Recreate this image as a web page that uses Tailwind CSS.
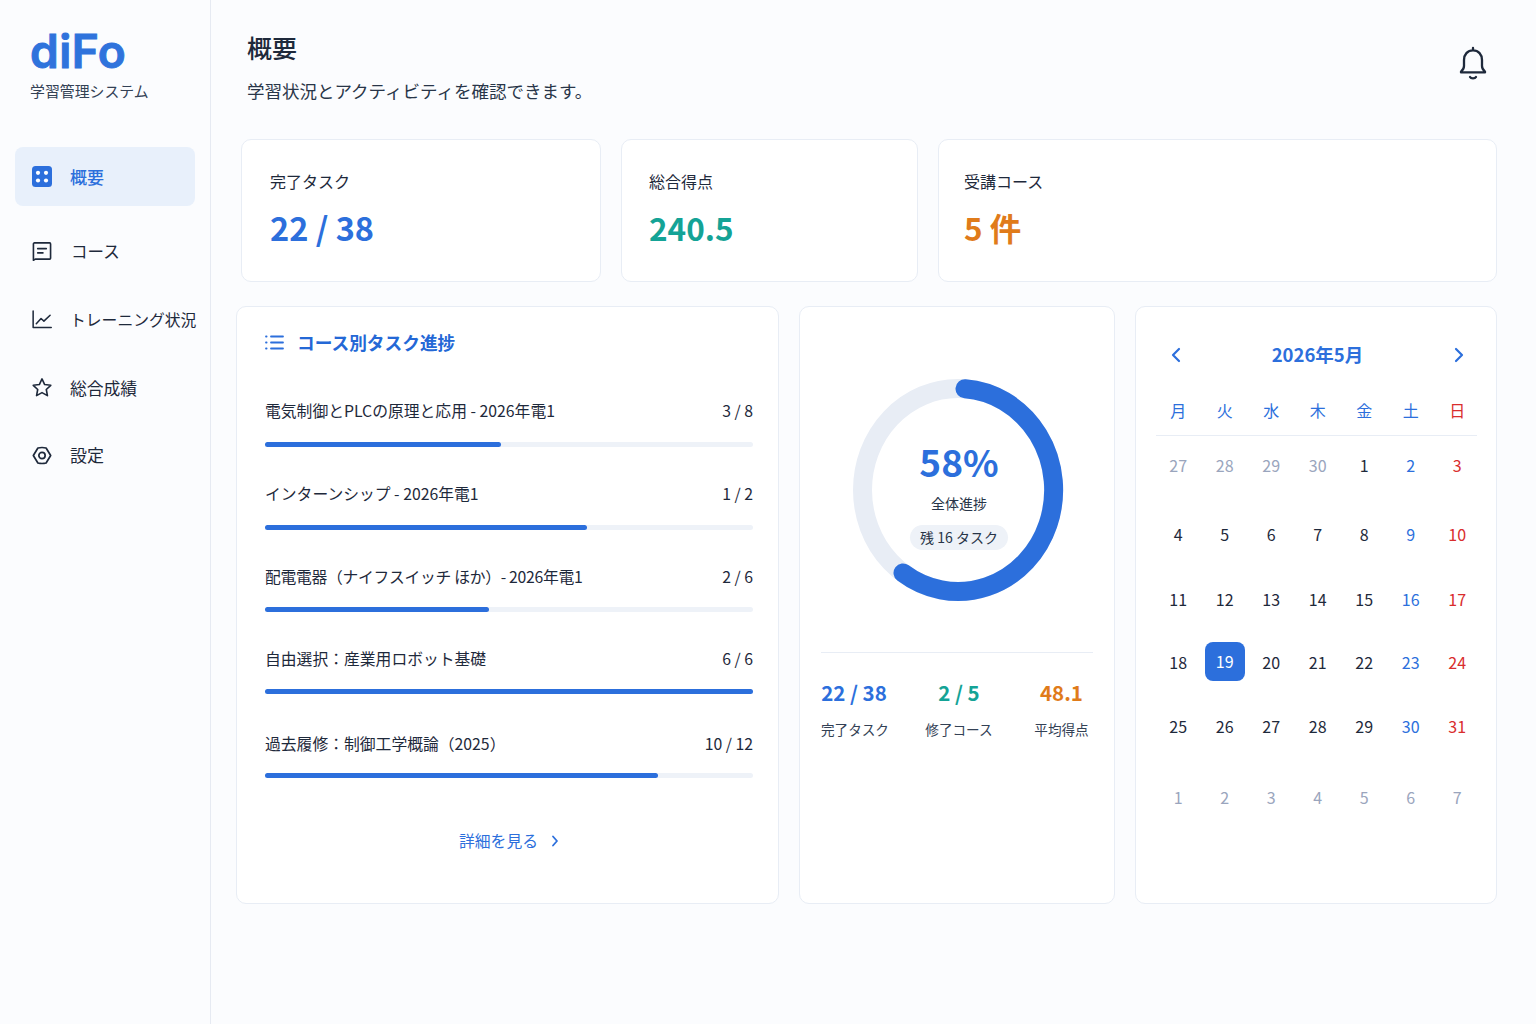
<!doctype html>
<html lang="ja">
<head>
    <meta charset="UTF-8">
    <script src="https://cdn.jsdelivr.net/npm/@tailwindcss/browser@4"></script>
    <title>diFo - 概要</title>
</head>

<body class="bg-[#fbfcfe] text-[#1e293b] font-['Noto_Sans_CJK_JP','Noto_Sans',sans-serif]">
<div class="flex w-[1536px] h-[1024px] overflow-hidden">

    <!-- sidebar -->
    <aside class="w-[211px] shrink-0 border-r border-[#e6eaf2] px-[15px]">
        <div class="pl-[15px] pt-[21px]">
            <div class="text-[46px] leading-[60px] font-semibold tracking-[0.5px] text-[#2f73dc] font-['Inter',sans-serif] [-webkit-text-stroke:1px_#2f73dc]">diFo</div>
            <div class="-mt-[1px] text-[14.9px] leading-[22px] text-[#334155]">学習管理システム</div>
        </div>

        <nav class="mt-[45px] flex flex-col">
            <a class="flex items-center h-[59px] rounded-lg bg-[#e8f0fb] pl-[17px] gap-[18px] text-[17px] font-medium text-[#2c6fdc]">
                <svg class="w-[20px] h-[21px] shrink-0" viewBox="0 0 20 21"><rect width="20" height="21" rx="3.5" fill="#2c6fdc"/><circle cx="6" cy="6.8" r="2.1" fill="#fff"/><circle cx="14" cy="6.8" r="2.1" fill="#fff"/><circle cx="6" cy="14.5" r="2.1" fill="#fff"/><circle cx="14" cy="14.5" r="2.1" fill="#fff"/></svg>
                概要
            </a>
            <a class="mt-[25px] flex items-center h-[40px] pl-[17px] gap-[19px] text-[16.5px]">
                <svg class="w-[20px] h-[21px] shrink-0" viewBox="0 0 21 21" fill="none" stroke="#1e293b" stroke-width="1.7" stroke-linejoin="round" stroke-linecap="round"><path d="M2.5 1.5h16a1 1 0 0 1 1 1v15a1 1 0 0 1-1 1H3.5l-2 1.2V2.5a1 1 0 0 1 1-1z"/><path d="M6 7.5h9M6 12h5.5"/></svg>
                コース
            </a>
            <a class="mt-[28px] flex items-center h-[40px] pl-[17px] gap-[18px] text-[15.8px] leading-[26px] pt-[1px] whitespace-nowrap">
                <svg class="w-[20px] h-[21px] shrink-0 -mt-[1px]" viewBox="0 0 21 21" fill="none" stroke="#1e293b" stroke-width="1.6" stroke-linejoin="round" stroke-linecap="round"><path d="M1.2 1.5V19h19"/><path d="M4.5 15l5-5.5 3 2.7L19 6"/></svg>
                トレーニング状況
            </a>
            <a class="mt-[28px] flex items-center h-[40px] pl-[17px] gap-[18px] text-[16.8px] leading-[26px] pt-[1px]">
                <svg class="w-[20px] h-[21px] shrink-0 -mt-[1px]" viewBox="0 0 21 21" fill="none" stroke="#1e293b" stroke-width="1.7" stroke-linejoin="round"><path d="M10.5 1.5l2.8 5.9 6.4.8-4.7 4.4 1.2 6.4-5.7-3.100-5.700 3.100 1.200-6.400L1.300 8.200l6.400-.8z"/></svg>
                総合成績
            </a>
            <a class="mt-[28px] flex items-center h-[40px] pl-[17px] gap-[18px] text-[17px]">
                <svg class="w-[20px] h-[21px] shrink-0" viewBox="0 0 21 21" fill="none" stroke="#1e293b" stroke-width="1.8" stroke-linejoin="round"><path d="M6.2 2.6Q10.5 1.6 14.8 2.6L19.6 10.5L14.8 18.4Q10.5 19.4 6.2 18.4L1.4 10.5Z"/><circle cx="10.5" cy="10.5" r="3.3"/></svg>
                設定
            </a>
        </nav>
    </aside>

    <!-- main -->
    <main class="flex-1 relative">
        <header class="pl-[36px] pt-[30px]">
            <h1 class="text-[25px] leading-[34px] font-medium">概要</h1>
            <p class="mt-[14px] text-[17.5px] leading-[26px] text-[#283548]">学習状況とアクティビティを確認できます。</p>
        </header>
        <svg class="absolute left-[1248px] top-[46px] w-[28px] h-[34px]" viewBox="0 0 28 34" fill="none" stroke="#1e293b" stroke-width="2.3" stroke-linecap="round" stroke-linejoin="round"><path d="M14 2v2.4M14 4.4c-5.5 0-9 4-9 9.6v6c0 2.5-1 4-3 5.6v.8h24v-.8c-2-1.6-3-3.1-3-5.6v-6c0-5.6-3.5-9.6-9-9.6z"/><path d="M11 31c1 1.8 5 1.8 6 0"/></svg>

        <!-- stat cards -->
        <section class="ml-[30px] mt-[35px] grid grid-cols-[360px_297px_559px] gap-x-[20px] h-[143px]">
            <div class="rounded-[10px] border border-[#e8edf5] bg-white pl-[28px] pt-[29px]">
                <div class="text-[16px] leading-[24px]">完了タスク</div>
                <div class="mt-[10px] text-[32.5px] leading-[48px] font-semibold text-[#2c6fdc]">22 / 38</div>
            </div>
            <div class="rounded-[10px] border border-[#e8edf5] bg-white pl-[27px] pt-[29px]">
                <div class="text-[16px] leading-[24px]">総合得点</div>
                <div class="mt-[10px] text-[31.5px] leading-[48px] font-semibold text-[#14a396]">240.5</div>
            </div>
            <div class="rounded-[10px] border border-[#e8edf5] bg-white pl-[25px] pt-[29px]">
                <div class="text-[16px] leading-[24px]">受講コース</div>
                <div class="mt-[10px] text-[31.5px] leading-[48px] font-semibold text-[#e07b1a]">5 件</div>
            </div>
        </section>

        <!-- lower cards -->
        <section class="ml-[25px] mt-[24px] grid grid-cols-[543px_316px_362px] gap-x-[20px] h-[598px]">

            <!-- course progress -->
            <div class="rounded-[10px] border border-[#e8edf5] bg-white pl-[28px] pr-[25px]">
                <div class="flex items-center h-[26px] mt-[22px] gap-[13px] text-[17.7px] font-semibold text-[#2468d6]">
                    <svg class="w-[19px] h-[15px]" viewBox="0 0 19 15" fill="none" stroke="#2c6fdc" stroke-width="1.8" stroke-linecap="round"><path d="M6 1.5h12M6 7.5h12M6 13.5h12"/><path d="M1 1.5h.6M1 7.5h.6M1 13.5h.6"/></svg>
                    コース別タスク進捗
                </div>

                <div class="mt-[44px] h-[54px]">
                    <div class="flex justify-between text-[15.8px] leading-[24px]"><span>電気制御とPLCの原理と応用 - 2026年電1</span><span>3 / 8</span></div>
                    <div class="mt-[19px] h-[5px] rounded-full bg-[#eef2f8]"><div class="h-full w-[48.4%] rounded-full bg-[#2c6fdc]"></div></div>
                </div>
                <div class="mt-[29px] h-[54px]">
                    <div class="flex justify-between text-[15.8px] leading-[24px]"><span>インターンシップ - 2026年電1</span><span>1 / 2</span></div>
                    <div class="mt-[19px] h-[5px] rounded-full bg-[#eef2f8]"><div class="h-full w-[66%] rounded-full bg-[#2c6fdc]"></div></div>
                </div>
                <div class="mt-[29px] h-[54px]">
                    <div class="flex justify-between text-[15.8px] leading-[24px]"><span class="tracking-[-0.3px]">配電電器（ナイフスイッチ ほか）- 2026年電1</span><span>2 / 6</span></div>
                    <div class="mt-[18px] h-[5px] rounded-full bg-[#eef2f8]"><div class="h-full w-[46%] rounded-full bg-[#2c6fdc]"></div></div>
                </div>
                <div class="mt-[28px] h-[54px]">
                    <div class="flex justify-between text-[15.8px] leading-[24px]"><span>自由選択：産業用ロボット基礎</span><span>6 / 6</span></div>
                    <div class="mt-[18px] h-[5px] rounded-full bg-[#eef2f8]"><div class="h-full w-full rounded-full bg-[#2c6fdc]"></div></div>
                </div>
                <div class="mt-[31px] h-[54px]">
                    <div class="flex justify-between text-[15.8px] leading-[24px]"><span>過去履修：制御工学概論（2025）</span><span>10 / 12</span></div>
                    <div class="mt-[17px] h-[5px] rounded-full bg-[#eef2f8]"><div class="h-full w-[80.5%] rounded-full bg-[#2c6fdc]"></div></div>
                </div>

                <a class="mt-[43px] flex items-center justify-center gap-[13px] text-[15.8px] leading-[24px] text-[#2c6fdc]">
                    詳細を見る
                    <svg class="w-[8px] h-[12px]" viewBox="0 0 8 12" fill="none" stroke="#2c6fdc" stroke-width="1.8" stroke-linecap="round" stroke-linejoin="round"><path d="M2 1.5l4 4.5-4 4.5"/></svg>
                </a>
            </div>

            <!-- overall progress -->
            <div class="rounded-[10px] border border-[#e8edf5] bg-white px-[21px]">
                <div class="relative mt-[63px] ml-[22px] w-[230px] h-[240px]">
                    <svg class="w-[230px] h-[240px]" viewBox="0 0 230 240" fill="none" stroke-width="19" stroke-linecap="round">
                        <ellipse cx="115" cy="120" rx="95.5" ry="101.5" stroke="#e8edf5"/>
                        <path d="M122 18.8A95.5 101.5 0 1 1 60 202.9" stroke="#2c6fdc"/>
                    </svg>
                    <div class="absolute inset-0 pl-[2px] flex flex-col items-center">
                        <div class="mt-[65px] text-[37px] leading-[52px] font-semibold text-[#2c6fdc]">58%</div>
                        <div class="mt-[5px] text-[14px] leading-[22px] text-[#283548]">全体進捗</div>
                        <div class="mt-[11px] h-[25px] px-[10px] rounded-full bg-[#eef2f8] text-[14px] leading-[25px] text-[#283548]">残 16 タスク</div>
                    </div>
                </div>
                <div class="mt-[42px] border-t border-[#e8edf5] flex text-center pt-[22px]">
                    <div class="w-[66px]">
                        <div class="text-[20.5px] leading-[34px] font-semibold whitespace-nowrap text-[#2c6fdc]">22 / 38</div>
                        <div class="mt-[10px] text-[13.6px] leading-[20px] text-[#334155] whitespace-nowrap">完了タスク</div>
                    </div>
                    <div class="ml-[38px] w-[68px]">
                        <div class="text-[20.5px] leading-[34px] font-semibold text-[#14a396]">2 / 5</div>
                        <div class="mt-[10px] text-[13.6px] leading-[20px] text-[#334155] whitespace-nowrap">修了コース</div>
                    </div>
                    <div class="ml-[41px] w-[55px]">
                        <div class="text-[20.5px] leading-[34px] font-semibold text-[#e07b1a]">48.1</div>
                        <div class="mt-[10px] text-[13.6px] leading-[20px] text-[#334155] whitespace-nowrap">平均得点</div>
                    </div>
                </div>
            </div>

            <!-- calendar -->
            <div class="rounded-[10px] border border-[#e8edf5] bg-white px-[19px]">
                <div class="mt-[34px] flex items-center justify-between h-[28px] pl-[15px] pr-[12px] text-[18.5px] font-semibold text-[#2c6fdc]">
                    <svg class="w-[12px] h-[16px]" viewBox="0 0 12 16" fill="none" stroke="#2c6fdc" stroke-width="2.2" stroke-linecap="round" stroke-linejoin="round"><path d="M9 2L3 8l6 6"/></svg>
                    2026年5月
                    <svg class="w-[12px] h-[16px]" viewBox="0 0 12 16" fill="none" stroke="#2c6fdc" stroke-width="2.2" stroke-linecap="round" stroke-linejoin="round"><path d="M3 2l6 6-6 6"/></svg>
                </div>
                <div class="mt-[29px] h-[37px] grid grid-cols-7 w-[325.5px] text-center text-[16px] leading-[24px] text-[#2c6fdc]">
                    <span>月</span><span>火</span><span>水</span><span>木</span><span>金</span><span>土</span><span class="text-[#d92d2d]">日</span>
                </div>
                <div class="w-[321px] ml-[1px] border-t border-[#e8edf5]"></div>
                <div class="grid grid-cols-7 w-[325.5px] grid-rows-[58px_80px_50px_76px_52px_90px] items-center justify-items-center text-[16px] leading-[24px]">
                    <span class="text-[#9aa5bd]">27</span><span class="text-[#9aa5bd]">28</span><span class="text-[#9aa5bd]">29</span><span class="text-[#9aa5bd]">30</span><span>1</span><span class="text-[#2c6fdc]">2</span><span class="text-[#d92d2d]">3</span>
                    <span>4</span><span>5</span><span>6</span><span>7</span><span>8</span><span class="text-[#2c6fdc]">9</span><span class="text-[#d92d2d]">10</span>
                    <span>11</span><span>12</span><span>13</span><span>14</span><span>15</span><span class="text-[#2c6fdc]">16</span><span class="text-[#d92d2d]">17</span>
                    <span>18</span><span class="flex items-center justify-center w-[40px] h-[39px] -translate-y-[1px] rounded-lg bg-[#2c6fdc] text-white">19</span><span>20</span><span>21</span><span>22</span><span class="text-[#2c6fdc]">23</span><span class="text-[#d92d2d]">24</span>
                    <span>25</span><span>26</span><span>27</span><span>28</span><span>29</span><span class="text-[#2c6fdc]">30</span><span class="text-[#d92d2d]">31</span>
                    <span class="text-[#9aa5bd]">1</span><span class="text-[#9aa5bd]">2</span><span class="text-[#9aa5bd]">3</span><span class="text-[#9aa5bd]">4</span><span class="text-[#9aa5bd]">5</span><span class="text-[#9aa5bd]">6</span><span class="text-[#9aa5bd]">7</span>
                </div>
            </div>
        </section>
    </main>
</div>
</body>
</html>
